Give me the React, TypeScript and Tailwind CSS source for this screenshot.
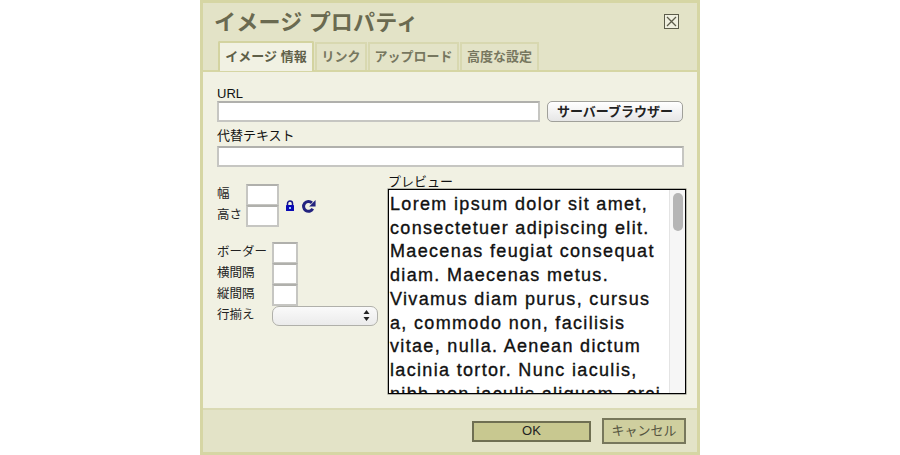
const lorem = ["Lorem ipsum dolor sit amet,","consectetuer adipiscing elit.","Maecenas feugiat consequat","diam. Maecenas metus.","Vivamus diam purus, cursus","a, commodo non, facilisis","vitae, nulla. Aenean dictum","lacinia tortor. Nunc iaculis,","nibh non iaculis aliquam, orci"];
const font = "font-['Liberation_Sans','Noto_Sans_CJK_JP',sans-serif]";
const box = "border-2 border-[#c6c6c2] border-t-[#b0b0ac] bg-white";

function Tab({ label, w, active }: { label: string; w: string; active?: boolean }) {
  return (
    <div className={`${w} flex items-center justify-center font-bold text-[13px] ${active ? "h-[30px] bg-[#f1f1e3] text-[#5f5f48] border-t-2 border-x-2 border-[#d3d3a0] -mb-[1px] rounded-t-[2px]" : "h-[28px] bg-[#e3e3c7] text-[#77775f] border-t-2 border-x-2 border-[#d8d8b0]"}`}>{label}</div>
  );
}

function Field({ label, w }: { label: string; w: string }) {
  return (
    <div className="flex items-center h-[21px]">
      <span className={`${w} text-[12.5px] text-[#222]`}>{label}</span>
      <div className={`${box} w-[26px] h-[22px]`} />
    </div>
  );
}

export default function App() {
  return (
    <div className={`w-[900px] h-[455px] bg-white overflow-hidden ${font}`}>
      <div className="mx-auto w-[500px] h-[455px] border-[3px] border-[#d6d6a4] flex flex-col bg-[#e3e3c7]">
        <div className="h-[69px] relative border-b-2 border-[#d6d6a4] px-[15px] flex flex-col">
          <div className="h-[39px] pt-[3px] flex items-center justify-between">
            <span className="text-[22px] font-bold text-[#6a6a50] tracking-[0.2px] -ml-[4px] -mt-[2px]">イメージ プロパティ</span>
            <svg width="15" height="15" viewBox="0 0 15 15" className="mr-[3px] mt-[-3px]">
              <rect x="0.5" y="0.5" width="14" height="14" fill="#f0f0e0" stroke="#5c5c4a" />
              <path d="M3 3L12 12M12 3L3 12" stroke="#5c5c4a" strokeWidth="1.3" />
            </svg>
          </div>
          <div className="flex items-end gap-[1px] h-[30px]">
            <Tab label="イメージ 情報" w="w-[96px]" active />
            <Tab label="リンク" w="w-[52px]" />
            <Tab label="アップロード" w="w-[91px]" />
            <Tab label="高度な設定" w="w-[79px]" />
          </div>
        </div>
        <div className="flex-1 bg-[#f1f1e3] pl-[14px] pr-[11px] pt-[15px] flex flex-col text-[#111]">
          <div className="text-[13px] leading-[14px] h-[14px]">URL</div>
          <div className="flex items-center justify-between w-[466px]">
            <div className={`${box} w-[323px] h-[21px]`} />
            <div className="w-[136px] h-[21px] rounded-[5px] border border-[#a0a09a] bg-gradient-to-b from-white to-[#e6e6e6] flex items-center justify-center text-[13px] font-bold text-[#222]">サーバーブラウザー</div>
          </div>
          <div className="text-[13px] leading-[14px] mt-[7px] h-[14px]">代替テキスト</div>
          <div className={`${box} w-[467px] h-[21px] mt-[3px]`} />
          <div className="flex mt-[14px]">
            <div className="w-[171px] shrink-0 flex flex-col pt-[3px]">
              <div className="flex items-center">
                <div className="flex flex-col">
                  <div className="flex items-center h-[21px]"><span className="w-[29px] text-[12.5px] text-[#222]">幅</span><div className={`${box} w-[33px] h-[22px]`} /></div>
                  <div className="flex items-center h-[21px]"><span className="w-[29px] text-[12.5px] text-[#222]">高さ</span><div className={`${box} w-[33px] h-[22px]`} /></div>
                </div>
                <svg width="10" height="12" viewBox="0 0 10 12" className="ml-[6px] mt-[2px]">
                  <path d="M2.5 5V3.5a2.5 2.5 0 0 1 5 0V5" fill="none" stroke="#14148c" strokeWidth="1.5" />
                  <rect x="1" y="5" width="8" height="6" fill="#0a0ab4" rx="0.5" />
                  <rect x="4" y="7" width="2" height="2" fill="#9cf" />
                </svg>
                <svg width="15" height="15" viewBox="0 0 14 14" className="ml-[6px] mt-[2px]">
                  <path d="M11 9.2A4.6 4.6 0 1 1 10.2 3.6" fill="none" stroke="#23237f" strokeWidth="2.8" />
                  <path d="M13.6 1V7H7.6Z" fill="#23237f" />
                </svg>
              </div>
              <div className="flex flex-col mt-[16px]">
                <Field label="ボーダー" w="w-[55px]" />
                <Field label="横間隔" w="w-[55px]" />
                <Field label="縦間隔" w="w-[55px]" />
                <div className="flex items-center h-[21px]">
                  <span className="w-[55px] text-[12.5px] text-[#222]">行揃え</span>
                  <div className="w-[106px] h-[20px] rounded-[7px] border border-[#b0b0aa] bg-gradient-to-b from-[#fafafa] to-[#ebebeb] flex items-center justify-end pr-[7px]">
                    <svg width="7" height="11" viewBox="0 0 7 11"><path d="M3.5 0L6.5 4H0.5ZM3.5 11L0.5 7H6.5Z" fill="#222" /></svg>
                  </div>
                </div>
              </div>
            </div>
            <div className="flex flex-col -mt-[6px]">
              <div className="text-[13px] leading-[14px] h-[14px]">プレビュー</div>
              <div className="w-[298px] h-[205px] border border-black shadow-[0_0_0_0.5px_rgba(0,0,0,0.5)] bg-white flex overflow-hidden">
                <div className="flex-1 pl-[1px] pt-[3px] text-[18px] leading-[23.7px] tracking-[1.33px] [-webkit-text-stroke:0.35px_#111] text-[#111] whitespace-nowrap overflow-hidden">
                  {lorem.map((l) => <div key={l}>{l}</div>)}
                </div>
                <div className="w-[16px] bg-[#f6f6f6] border-l border-[#e4e4e4] flex justify-center pt-[3px]">
                  <div className="w-[10px] h-[38px] rounded-[5px] bg-[#b5b5b5]" />
                </div>
              </div>
            </div>
          </div>
        </div>
        <div className="h-[44px] border-t-2 border-[#dadab4] flex items-center justify-end gap-[11px] pr-[11px]">
          <div className="w-[119px] h-[21px] border-2 border-[#6f6f52] bg-[#c8c890] flex items-center justify-center text-[13px] text-[#222]">OK</div>
          <div className="w-[84px] h-[26px] border-2 border-[#77775c] bg-[#cfcf9f] flex items-center justify-center text-[13px] text-[#55553f]">キャンセル</div>
        </div>
      </div>
    </div>
  );
}
